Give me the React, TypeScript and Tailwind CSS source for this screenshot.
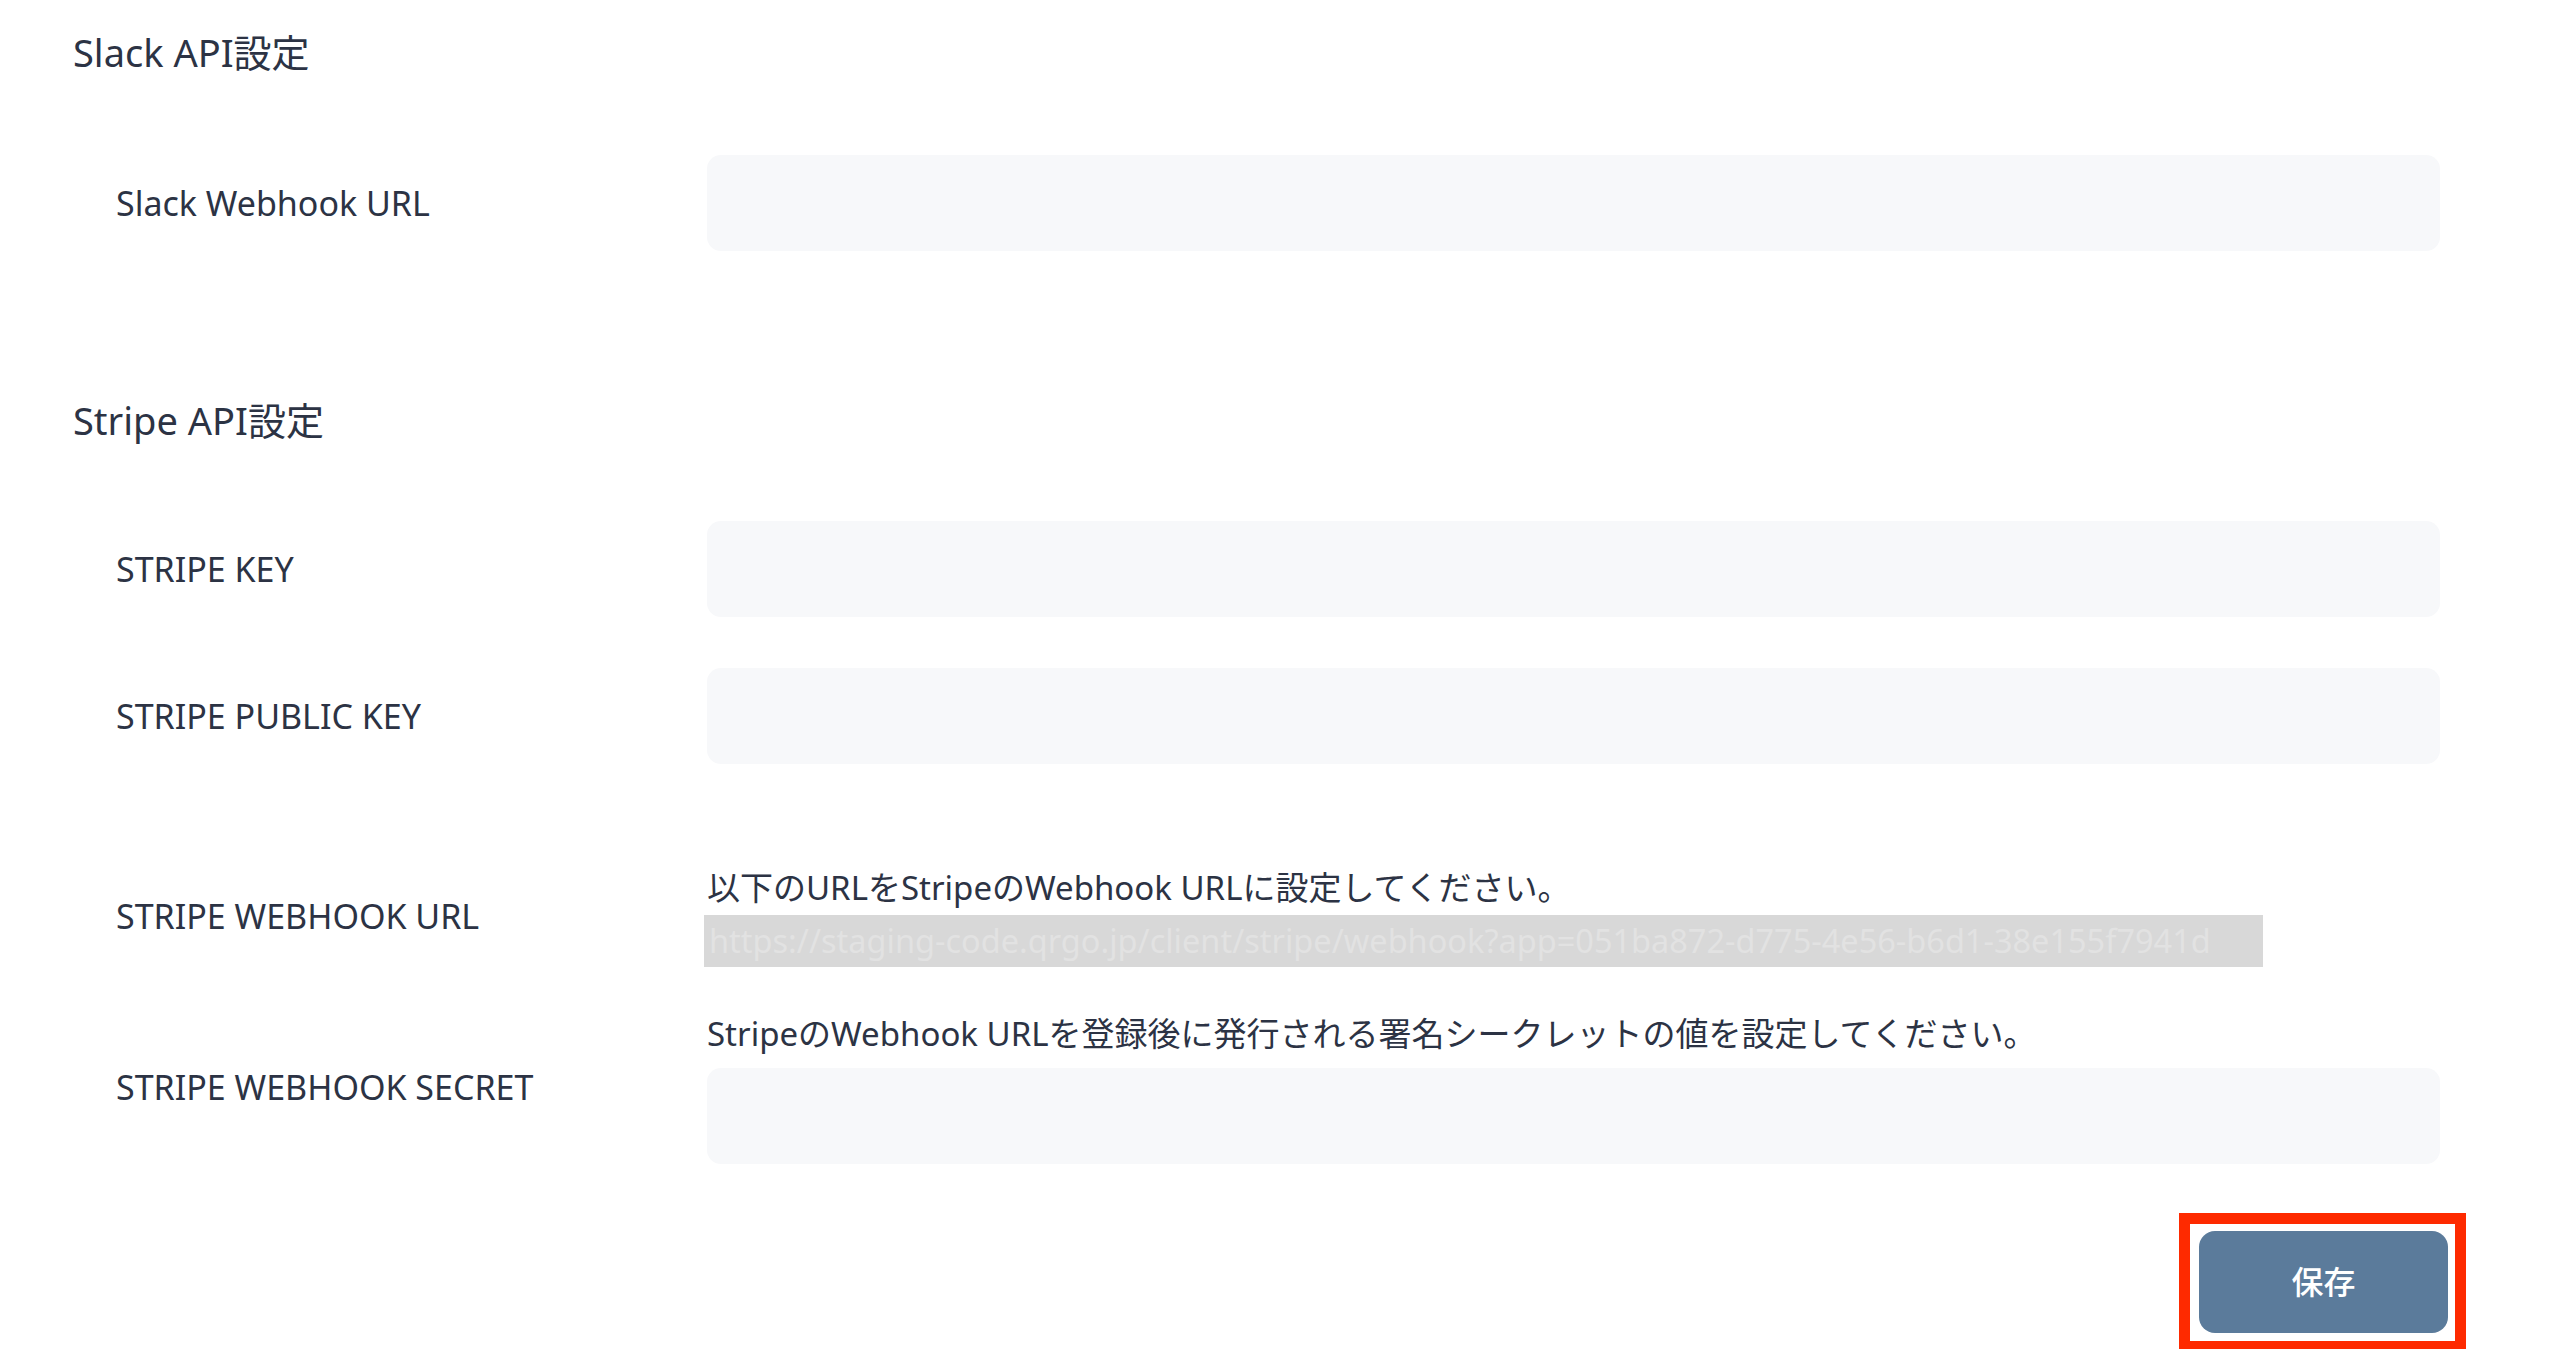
import React from 'react'

const font = { fontFamily: '"Noto Sans", "Noto Sans CJK JP", sans-serif' }

function Field({ label, children }: { label: string; children: React.ReactNode }) {
  return (
    <div className="flex flex-row items-center">
      <div className="w-[634px] shrink-0 pl-[43px] text-[34px] leading-[48px] text-[#2c3344]">{label}</div>
      <div className="grow">{children}</div>
    </div>
  )
}

function Input() {
  return <div className="h-[96px] w-full rounded-[14px] bg-[#f7f8fa]" />
}

export default function App() {
  return (
    <div className="min-h-[1349px] w-full overflow-hidden bg-white" style={font}>
      <div className="flex flex-col pl-[73px] pr-[120px] pt-[25px]">
        <h2 className="text-[38px] leading-[54px] text-[#2c3344]">Slack API設定</h2>

        <div className="mt-[76px]">
          <Field label="Slack Webhook URL">
            <Input />
          </Field>
        </div>

        <h2 className="mt-[142px] text-[38px] leading-[54px] text-[#2c3344]">Stripe API設定</h2>

        <div className="mt-[74px] flex flex-col gap-[51px]">
          <Field label="STRIPE KEY">
            <Input />
          </Field>
          <Field label="STRIPE PUBLIC KEY">
            <Input />
          </Field>
        </div>

        <div className="mt-[100px]">
          <Field label="STRIPE WEBHOOK URL">
            <p className="text-[33px] leading-[48px] text-[#2c3344]">以下のURLをStripeのWebhook URLに設定してください。</p>
            <div className="-ml-[3px] mt-[3px] flex h-[52px] w-[1559px] items-center whitespace-nowrap bg-[#d8d8d8] pl-[5px] text-[32.5px] text-[#e2e2e2]">
              https://staging-code.qrgo.jp/client/stripe/webhook?app=051ba872-d775-4e56-b6d1-38e155f7941d
            </div>
          </Field>
        </div>

        <div className="mt-[43px]">
          <Field label="STRIPE WEBHOOK SECRET">
            <p className="text-[33px] leading-[48px] text-[#2c3344]">StripeのWebhook URLを登録後に発行される署名シークレットの値を設定してください。</p>
            <div className="mt-[10px]">
              <Input />
            </div>
          </Field>
        </div>

        <div className="-mr-[26px] mt-[49px] flex justify-end">
          <div className="border-[11px] border-[#fe2a00] pb-[8px] pl-[9px] pr-[7px] pt-[7px]">
            <button className="flex h-[102px] w-[249px] items-center justify-center rounded-[16px] bg-[#5b7b9b] text-[32px] font-medium text-white">
              保存
            </button>
          </div>
        </div>
      </div>
    </div>
  )
}
